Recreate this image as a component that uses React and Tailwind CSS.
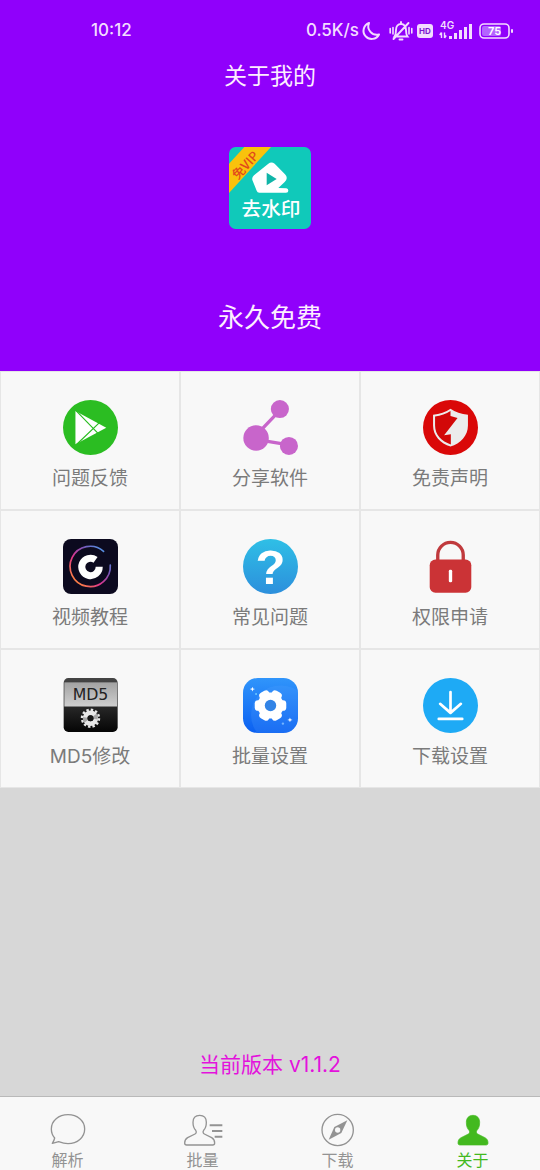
const FeedbackIcon = () => (
  <svg viewBox="0 0 164 164" className="size-[55px]">
    <circle cx="82" cy="82" r="82" fill="#2bbd22" />
    <path d="M37 33 L129 83 L37 132 Z" fill="#fff" />
    <path d="M38 31 L106 101 M38 135 L111 65" stroke="#2bbd22" strokeWidth="3.5" />
  </svg>
);

const ShareIcon = () => (
  <svg viewBox="0 0 164 164" className="size-[55px]" fill="#c865cb">
    <path d="M45 99 L110 31 M60 121 L137 134" stroke="#c865cb" strokeWidth="10" />
    <circle cx="39" cy="113" r="38" />
    <circle cx="110" cy="27" r="27" />
    <circle cx="137" cy="137" r="27" />
  </svg>
);

const ShieldIcon = () => (
  <svg viewBox="0 0 164 164" className="size-[55px]">
    <circle cx="82" cy="82" r="82" fill="#da0808" />
    <path d="M82 26 C96 36 114 42 134 44 V76 C134 107 112 129 82 139 C52 129 30 107 30 76 V44 C50 42 68 36 82 26Z" fill="#ececec" />
    <path d="M82 33 V48 L103 54 L63 105 L83 102 V133 C55 122 36 104 36 76 V49 C53 47 69 42 82 33Z" fill="#d20808" />
  </svg>
);

const VideoIcon = () => (
  <svg viewBox="0 0 164 164" className="size-[55px]">
    <defs>
      <linearGradient id="ring" x1="0" y1="1" x2="1" y2="0">
        <stop offset="0.1" stopColor="#ff8a3c" />
        <stop offset="0.4" stopColor="#e0348c" />
        <stop offset="0.65" stopColor="#7a55b8" />
        <stop offset="0.9" stopColor="#4f9bea" />
      </linearGradient>
    </defs>
    <rect width="164" height="164" rx="24" fill="#0c0a1f" />
    <path d="M121 37 A60 60 0 1 0 141 78" fill="none" stroke="url(#ring)" strokeWidth="5" strokeLinecap="round" />
    <path d="M97 62 A26 26 0 1 0 108 83" fill="none" stroke="#fff" strokeWidth="21" />
  </svg>
);

const QuestionIcon = () => (
  <svg viewBox="0 0 164 164" className="size-[55px]">
    <defs>
      <linearGradient id="question" x1="0" y1="0" x2="0" y2="1">
        <stop stopColor="#2fbfe6" />
        <stop offset="1" stopColor="#2c8fdc" />
      </linearGradient>
    </defs>
    <circle cx="82" cy="82" r="82" fill="url(#question)" />
    <text x="82" y="135" textAnchor="middle" fontSize="146" fontWeight="700" fontFamily="Liberation Sans, sans-serif" fill="#fff">?</text>
  </svg>
);

const LockIcon = () => (
  <svg viewBox="0 0 164 164" className="size-[55px]">
    <path d="M44 66 V48 A38 38 0 0 1 120 48 V66" fill="none" stroke="#c03a3d" strokeWidth="10" />
    <rect x="20" y="61" width="124" height="99" rx="17" fill="#cb3336" />
    <rect x="77" y="92" width="10" height="37" rx="4" fill="#fff" />
  </svg>
);

const Md5Icon = () => (
  <svg viewBox="0 0 164 164" className="size-[55px]">
    <defs>
      <linearGradient id="plate" x1="0" y1="0" x2="0" y2="1">
        <stop stopColor="#a2a2a2" />
        <stop offset="1" stopColor="#cfcfcf" />
      </linearGradient>
      <linearGradient id="base" x1="0" y1="0" x2="0" y2="1">
        <stop stopColor="#454545" />
        <stop offset="0.55" stopColor="#262626" />
        <stop offset="1" stopColor="#050505" />
      </linearGradient>
    </defs>
    <rect x="2" y="0" width="161" height="161" rx="14" fill="url(#base)" />
    <rect x="4" y="13" width="157" height="72" fill="url(#plate)" />
    <text x="82" y="66" textAnchor="middle" fontSize="47" fontFamily="DejaVu Sans, sans-serif" fill="#222">MD5</text>
    <circle cx="82" cy="120" r="25" fill="none" stroke="#e8e8e8" strokeWidth="8" strokeDasharray="7.1 5.99" />
    <circle cx="82" cy="120" r="16" fill="none" stroke="#e8e8e8" strokeWidth="14" />
    <path d="M82 120 L102 105 A24 24 0 0 1 103 124Z M82 120 L62 134 A24 24 0 0 1 60 116Z" fill="#8c8c8c" opacity="0.7" />
    <circle cx="82" cy="120" r="9" fill="#161616" />
  </svg>
);

const BatchIcon = () => (
  <svg viewBox="0 0 164 164" className="size-[55px]">
    <defs>
      <linearGradient id="batch" x1="0" y1="0" x2="0" y2="1">
        <stop stopColor="#3095fb" />
        <stop offset="1" stopColor="#0b60f1" />
      </linearGradient>
      <clipPath id="tile">
        <rect width="164" height="164" rx="44" />
      </clipPath>
    </defs>
    <rect width="164" height="164" rx="44" fill="url(#batch)" />
    <circle cx="112" cy="110" r="88" fill="#5aa5ff" opacity="0.2" clipPath="url(#tile)" />
    <g fill="#fff">
      <circle cx="82" cy="82" r="39" />
      <rect x="35" y="66" width="94" height="32" rx="10" />
      <rect x="35" y="66" width="94" height="32" rx="10" transform="rotate(60 82 82)" />
      <rect x="35" y="66" width="94" height="32" rx="10" transform="rotate(120 82 82)" />
    </g>
    <circle cx="82" cy="82" r="17" fill="#3284e6" />
    <path d="M28 26 L30 31 L36 33 L30 35 L28 40 L26 35 L20 33 L26 31Z M140 118 L142 123 L148 125 L142 127 L140 132 L138 127 L132 125 L138 123Z" fill="#fff" />
    <circle cx="39" cy="48" r="3" fill="#6dc8ff" />
    <circle cx="119" cy="136" r="3.5" fill="#75b4ff" />
  </svg>
);

const DownloadIcon = () => (
  <svg viewBox="0 0 164 164" className="size-[55px]">
    <circle cx="82" cy="82" r="82" fill="#1eaaf5" />
    <path d="M82 42 V102 M51 77 L82 104 L113 77 M47 122 H117" fill="none" stroke="#fff" strokeWidth="8" strokeLinecap="round" strokeLinejoin="round" />
  </svg>
);

const personPath =
  "M53 10 C66 10 73 19 73 31 C73 43 70 50 65 55 C62 59 63 64 67 66 L89 77 C96 81 98 86 98 93 C98 97 96 99 92 99 H14 C10 99 8 97 8 93 C8 86 10 81 17 77 L39 66 C43 64 44 59 41 55 C36 50 33 43 33 31 C33 19 40 10 53 10Z";

const ChatTab = () => (
  <svg viewBox="0 9 126 96" className="h-8 w-[42px] overflow-visible" fill="none" stroke="currentColor" strokeWidth="4">
    <path d="M16 94 C20 88 22 83 23 78 C16 70 13 61 13 51 C13 26 35 8 63 8 S113 26 113 51 S91 95 63 95 C52 95 43 92 35 89 C29 91 23 93 16 94Z" strokeLinejoin="round" />
  </svg>
);

const BatchTab = () => (
  <svg viewBox="0 9 126 96" className="h-8 w-[42px] overflow-visible" fill="none" stroke="currentColor" strokeWidth="4">
    <path d={personPath} />
    <path d="M83 40 H121 M90 57 H121 M98 74 H121" strokeWidth="6" />
  </svg>
);

const CompassTab = () => (
  <svg viewBox="0 9 126 96" className="h-8 w-[42px] overflow-visible">
    <circle cx="62" cy="54" r="47" fill="none" stroke="currentColor" strokeWidth="4" />
    <path d="M91 25 L73 63 L35 83 L52 45Z" fill="currentColor" />
    <circle cx="62" cy="54" r="8" fill="#f8f8f8" />
  </svg>
);

const PersonTab = () => (
  <svg viewBox="0 9 126 96" className="h-8 w-[42px] overflow-visible">
    <path d={personPath} transform="translate(10 0)" fill="currentColor" stroke="currentColor" strokeWidth="2" />
  </svg>
);

const Logo = () => (
  <svg viewBox="0 0 246 246" className="mt-[57px] size-[82px]" role="img" aria-label="去水印">
    <defs>
      <clipPath id="logo">
        <rect width="246" height="246" rx="20" />
      </clipPath>
    </defs>
    <g clipPath="url(#logo)">
      <rect width="246" height="246" fill="#10c9ba" />
      <path d="M46 0 H126 L0 138 V50Z" fill="#f9c20c" />
    </g>
    <text x="0" y="0" transform="translate(47 53) rotate(-47)" textAnchor="middle" dominantBaseline="central" fontSize="38" fontWeight="500" fontFamily="Noto Sans CJK SC, sans-serif" fill="#e2481c">免VIP</text>
    <path d="M118 50 Q127 43 137 50 L168 82 Q179 93 167 105 L148 123 L172 124 Q178 125 178 131 Q178 137 171 137 H91 Q85 137 83 131 L70 99 Q68 91 75 85Z" fill="#fff" />
    <path d="M113 77 L143 96 L113 115Z" fill="#10b5a8" />
    <text x="126" y="206" textAnchor="middle" fontSize="59" fontWeight="500" fontFamily="Noto Sans CJK SC, sans-serif" fill="#fff">去水印</text>
  </svg>
);

const StatusIcons = () => (
  <div className="flex items-center text-[#f3dcff]">
    <svg viewBox="0 0 20 20" className="ml-[2px] size-5" fill="none" stroke="currentColor" strokeWidth="2" strokeLinejoin="round">
      <path d="M8 2 A8.200 8.200 0 1 0 18 13.500 A8.500 8.500 0 0 1 8 2Z" />
    </svg>
    <svg viewBox="0 0 24 20" className="ml-2 h-5 w-6" fill="none" stroke="currentColor" strokeWidth="1.900" strokeLinecap="round">
      <path d="M5.500 15.500 H18.500 C17 13.500 17 12 17 9 C17 5.500 15 3 12 3 S7 5.500 7 9 C7 12 7 13.500 5.500 15.500Z M12 1 V3 M10.500 18.500 H13.500 M19.500 2 L4.500 18" />
      <path d="M1.200 7.500 V12 M4 6.500 V13 M20 6.500 V13 M22.800 7.500 V12" strokeWidth="1.600" />
    </svg>
    <svg viewBox="0 0 16 14" className="ml-1 h-[14px] w-4">
      <rect width="16" height="14" rx="3" fill="currentColor" />
      <text x="8" y="10" textAnchor="middle" fontSize="8" fontWeight="700" fontFamily="Inter, sans-serif" fill="#7a16cf">HD</text>
    </svg>
    <svg viewBox="0 -2 34 24" className="ml-[6px] h-6 w-[34px]" fill="currentColor">
      <text x="1" y="8" fontSize="10" fontWeight="600" fontFamily="Inter, sans-serif">4G</text>
      <path d="M2.500 11.500 V17 M0.700 14 L2.500 11.500 M5.500 11.500 V17 M5.500 17 L7.200 14.500" fill="none" stroke="currentColor" strokeWidth="1.400" />
      <path d="M10 15 H13 V18 H10Z M15 12 H18 V18 H15Z M20 9 H23 V18 H20Z M25 6 H28 V18 H25Z M30 3 H33 V18 H30Z" />
    </svg>
    <svg viewBox="0 0 34 16" className="ml-[6px] h-4 w-[34px]">
      <rect x="1" y="1" width="29" height="14" rx="4" fill="none" stroke="currentColor" strokeWidth="1.600" />
      <rect x="3" y="3" width="19" height="10" rx="2" fill="#b464ff" />
      <rect x="32" y="6" width="2" height="4" rx="1" fill="currentColor" />
      <text x="15.500" y="12" textAnchor="middle" fontSize="11" fontWeight="600" fontFamily="Inter, sans-serif" fill="#fff">75</text>
    </svg>
  </div>
);

const items = [
  { label: "问题反馈", Icon: FeedbackIcon },
  { label: "分享软件", Icon: ShareIcon },
  { label: "免责声明", Icon: ShieldIcon },
  { label: "视频教程", Icon: VideoIcon },
  { label: "常见问题", Icon: QuestionIcon },
  { label: "权限申请", Icon: LockIcon },
  { label: "MD5修改", Icon: Md5Icon },
  { label: "批量设置", Icon: BatchIcon },
  { label: "下载设置", Icon: DownloadIcon },
];

const tabs = [
  { label: "解析", Icon: ChatTab },
  { label: "批量", Icon: BatchTab },
  { label: "下载", Icon: CompassTab },
  { label: "关于", Icon: PersonTab, active: true },
];

const App = () => (
  <div className="flex min-h-screen flex-col bg-[#d7d7d7] font-['Inter','Noto_Sans_CJK_SC',sans-serif]">
    <header className="flex flex-col items-center bg-[#9000fb] pb-[35px] text-[#fdeeff]">
      <div className="flex h-[62px] w-full items-center justify-between pr-[27px] pl-[91px] text-[17px] font-medium text-[#f3dcff]">
        <span>10:12</span>
        <div className="flex items-center">
          <span>0.5K/s</span>
          <StatusIcons />
        </div>
      </div>
      <h1 className="text-[23px] leading-7">关于我的</h1>
      <Logo />
      <p className="mt-[71px] text-[26px] leading-9">永久免费</p>
    </header>

    <main className="flex flex-1 flex-col">
      <div className="grid grid-cols-3">
        {items.map(({ label, Icon }) => (
          <button key={label} className="flex flex-col items-center gap-[9px] border border-[#e6e6e6] bg-[#f8f8f8] pt-7 pb-[15px]">
            <Icon />
            <span className="text-[19px] leading-[30px] text-[#7b7b7b]">{label}</span>
          </button>
        ))}
      </div>
      <p className="mt-auto pb-[15px] text-center text-[21px] leading-8 text-[#e312dc]">当前版本 v1.1.2</p>
    </main>

    <nav className="grid grid-cols-4 border-t border-[#b9b9b9] bg-[#f8f8f8] pt-[18px]">
      {tabs.map(({ label, Icon, active }) => (
        <button key={label} className={`flex flex-col items-center gap-[3px] ${active ? "text-[#43b91f]" : "text-[#939393]"}`}>
          <Icon />
          <span className="text-base leading-5">{label}</span>
        </button>
      ))}
    </nav>
  </div>
);

export default App;
